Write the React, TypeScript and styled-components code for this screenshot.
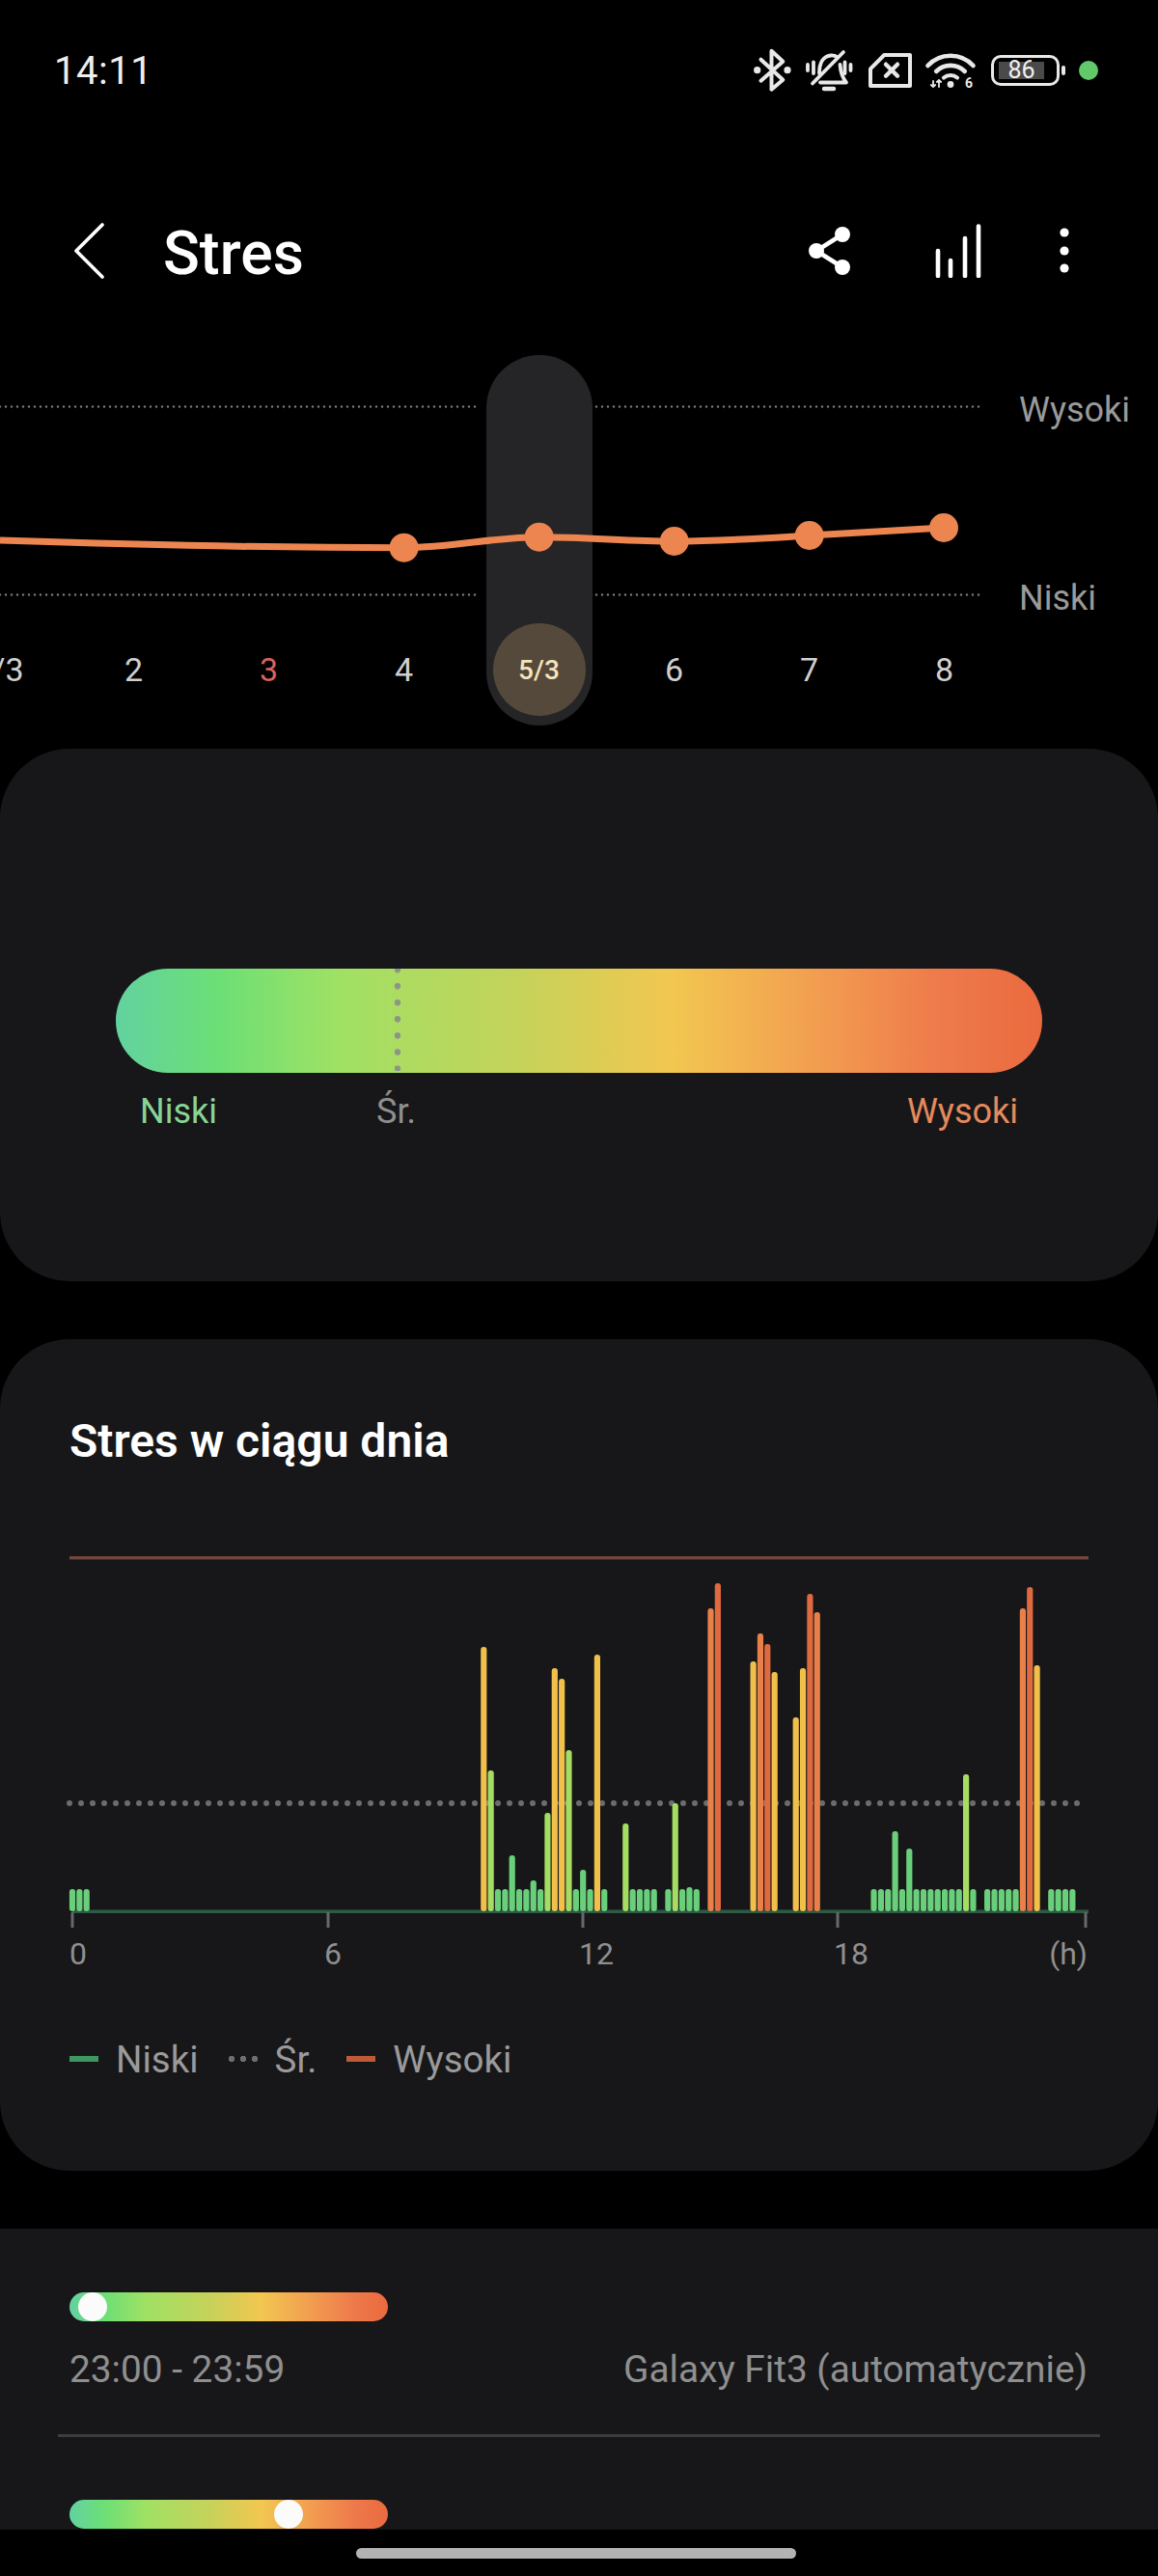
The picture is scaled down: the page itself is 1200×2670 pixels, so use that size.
import { createGlobalStyle } from "styled-components";
import styled from "styled-components";

const GlobalStyle = createGlobalStyle`
  html, body {
    margin: 0;
    padding: 0;
    background: #000;
    font-family: Roboto, "Liberation Sans", sans-serif;
  }
`;

const STRESS_GRADIENT =
  "linear-gradient(90deg, #62d2a0 0%, #6cdf76 11%, #9fe164 24%, #c6d25a 44%, #f2c750 60%, #f29a50 77%, #ee7a4b 89%, #ea6a3e 100%)";

const Screen = styled.div`
  position: relative;
  width: 1200px;
  height: 2670px;
  overflow: hidden;
  background: #000;
`;

const StatusBar = styled.div`
  display: flex;
  align-items: center;
  height: 50px;
  padding: 48px 62px 0 56px;
`;

const Clock = styled.span`
  font-size: 40px;
  color: #eeeeee;
  letter-spacing: 0.5px;
`;

const StatusIcons = styled.div`
  display: flex;
  align-items: center;
  gap: 12px;
  margin-left: auto;
`;

const Battery = styled.div`
  display: flex;
  align-items: center;
  gap: 2px;
`;

const BatteryBody = styled.div`
  box-sizing: border-box;
  display: flex;
  align-items: center;
  width: 71px;
  height: 32px;
  padding-left: 5px;
  border: 3px solid #e8e8e8;
  border-radius: 10px;
`;

const BatteryLevel = styled.span`
  width: 47px;
  height: 18px;
  background: #4a4a4a;
  color: #f0f0f0;
  font-size: 25px;
  line-height: 18px;
  text-align: center;
`;

const BatteryNub = styled.span`
  width: 4px;
  height: 10px;
  border-radius: 2px;
  background: #e8e8e8;
`;

const GreenDot = styled.span`
  width: 20px;
  height: 20px;
  margin-left: 2px;
  border-radius: 50%;
  background: #62c96a;
`;

const TopBar = styled.header`
  display: flex;
  align-items: center;
  height: 100px;
  margin-top: 112px;
  padding: 0 89px 0 75px;
`;

const PageTitle = styled.h1`
  margin: 5px 0 0 58px;
  font-size: 62.5px;
  line-height: 70px;
  font-weight: 500;
  color: #fff;
`;

const TopActions = styled.div`
  display: flex;
  align-items: center;
  gap: 75px;
  margin-left: auto;
`;

const Trend = styled.section`
  position: relative;
  height: 408px;
  margin-top: 58px;
  overflow: hidden;
`;

const SelectedPill = styled.div`
  position: absolute;
  top: 0;
  left: 504px;
  width: 110px;
  height: 384px;
  border-radius: 55px;
  background: #252527;
`;

const TrendPlot = styled.div`
  position: relative;
  display: flex;
  height: 278px;
`;

const LevelLabels = styled.div`
  display: flex;
  flex-direction: column;
  gap: 155px;
  margin-left: 38px;
  padding-top: 37px;
`;

const LevelLabel = styled.span`
  font-size: 36px;
  line-height: 40px;
  color: #9a9a9a;
`;

const DayRow = styled.div`
  position: relative;
  display: flex;
  margin-left: -71.5px;
`;

const Day = styled.div<{ $tone?: "weekend" | "selected" }>`
  display: flex;
  flex: 0 0 140px;
  align-items: center;
  justify-content: center;
  height: 96px;
  font-size: 34px;
  color: ${(p) => (p.$tone === "weekend" ? "#d9635b" : "#cfcfcf")};
`;

const SelectedDay = styled.span`
  display: flex;
  align-items: center;
  justify-content: center;
  width: 96px;
  height: 96px;
  border-radius: 50%;
  background: #54493a;
  color: #f6e3bd;
  font-size: 28px;
  font-weight: 500;
`;

const Card = styled.section`
  height: 552px;
  padding: 228px 120px 0;
  box-sizing: border-box;
  border-radius: 72px;
  background: #171719;
`;

const ScaleBar = styled.div`
  position: relative;
  height: 108px;
  border-radius: 54px;
  background: ${STRESS_GRADIENT};
`;

const AverageMark = styled.span`
  position: absolute;
  top: 0;
  left: 288px;
  width: 8px;
  height: 106px;
  background: radial-gradient(circle at 4px 4px, #8f9488 3px, transparent 3.6px) 0 -3px / 8px 17.1px repeat-y;
`;

const ScaleLabels = styled.div`
  display: flex;
  padding: 18px 25px 0 25px;
  font-size: 36px;
  line-height: 44px;
`;

const ScaleLabel = styled.span<{ $color: string; $offset?: number; $end?: boolean }>`
  color: ${(p) => p.$color};
  margin-left: ${(p) => (p.$end ? "auto" : `${p.$offset ?? 0}px`)};
`;

const ChartCard = styled.section`
  height: 862px;
  margin-top: 60px;
  padding-top: 76px;
  box-sizing: border-box;
  border-radius: 72px;
  background: #171719;
`;

const ChartTitle = styled.h2`
  margin: 0 0 76px 72px;
  font-size: 48px;
  line-height: 60px;
  font-weight: 600;
  color: #fff;
`;

const ChartSvg = styled.svg`
  display: block;
`;

const AxisLabels = styled.div`
  display: grid;
  grid-template-columns: 264px 264px 264px 150px 1fr;
  width: 1055px;
  height: 50px;
  margin-left: 72px;
  font-size: 32px;
  line-height: 50px;
  color: #8f8f8f;
`;

const AxisEnd = styled.span`
  text-align: right;
`;

const Legend = styled.div`
  display: flex;
  align-items: center;
  height: 50px;
  margin: 59px 0 0 72px;
  font-size: 38.5px;
  color: #9a9a9a;
`;

const LegendSwatch = styled.span<{ $color: string }>`
  width: 30px;
  height: 6px;
  margin-right: 18px;
  background: ${(p) => p.$color};
`;

const LegendDots = styled.span`
  width: 30px;
  height: 6px;
  margin-right: 18px;
  background: radial-gradient(circle at 3px 3px, #6e6e6e 3px, transparent 3.5px) 0 0 / 12px 6px repeat-x;
`;

const LegendText = styled.span`
  margin-right: 31px;
`;

const Readings = styled.section`
  height: 400px;
  margin-top: 60px;
  padding-top: 66px;
  box-sizing: border-box;
  background: #171719;
`;

const ReadingRow = styled.div`
  padding: 0 73px 0 72px;
`;

const ReadingSlider = styled.div`
  position: relative;
  width: 330px;
  height: 30px;
  border-radius: 15px;
  background: ${STRESS_GRADIENT};
`;

const ReadingThumb = styled.span<{ $left: number }>`
  position: absolute;
  top: 0;
  left: ${(p) => p.$left}px;
  width: 30px;
  height: 30px;
  border-radius: 50%;
  background: #fbfbfb;
`;

const ReadingMeta = styled.div`
  display: flex;
  justify-content: space-between;
  margin-top: 30px;
  font-size: 38.8px;
  line-height: 40px;
  color: #8f8f8f;
`;

const Divider = styled.hr`
  height: 3px;
  margin: 47px 60px 65px;
  border: 0;
  background: #3c3c3e;
`;

const NavBar = styled.div`
  position: absolute;
  left: 0;
  right: 0;
  bottom: 0;
  height: 48px;
  background: #000;
`;

const HomeIndicator = styled.div`
  width: 456px;
  height: 11px;
  margin: 19px 0 0 369px;
  border-radius: 6px;
  background: #b3b3b3;
`;

type BarKind = "g" | "l" | "y" | "o" | "d";

const BAR_COLORS: Record<BarKind, string> = {
  g: "#69cf7b",
  l: "#a5dc62",
  y: "#f0c04a",
  o: "#ea8049",
  d: "#e06a40",
};

// slot = 10 minut, wysokosc w px
const lowSlots = [
  0, 1, 2, 60, 61, 63, 64, 66, 71, 73, 75, 79, 80, 81, 82, 84, 86, 88, 113, 114, 115, 117,
  119, 120, 121, 122, 123, 124, 125, 127, 129, 130, 131, 132, 133, 138, 139, 140, 141,
];

const tallBars: [number, number, BarKind][] = [
  [58, 274, "y"], [59, 146, "l"], [62, 58, "g"], [65, 32, "g"], [67, 102, "l"],
  [68, 252, "y"], [69, 241, "y"], [70, 167, "l"], [72, 43, "g"], [74, 266, "y"],
  [78, 91, "l"], [85, 112, "l"], [87, 25, "g"], [90, 314, "o"], [91, 340, "d"],
  [96, 259, "y"], [97, 288, "o"], [98, 277, "d"], [99, 248, "y"], [102, 201, "y"],
  [103, 252, "y"], [104, 329, "d"], [105, 310, "o"], [116, 83, "g"], [118, 65, "g"],
  [126, 142, "l"], [134, 314, "o"], [135, 336, "d"], [136, 255, "y"],
];

const bars: [number, number, BarKind][] = [
  ...lowSlots.map((slot): [number, number, BarKind] => [slot, 23, "g"]),
  ...tallBars,
];

const BASE_Y = 381;
const slotX = (slot: number) => 75 + slot * 7.35;

const midDots = Array.from({ length: 88 }, (_, i) => 72 + i * 12);
const ticks = [75, 340, 604, 868, 1125];

const StressChart = () => (
  <ChartSvg width="1200" height="400" viewBox="0 0 1200 400">
    <rect x="72" y="13" width="1056" height="3.4" fill="#73463b" />
    {midDots.map((x) => (
      <circle key={x} cx={x} cy="269" r="3" fill="#6c6c6c" />
    ))}
    <rect x="75" y={BASE_Y - 1.5} width="1053" height="3.5" fill="#2e5a45" />
    {ticks.map((x) => (
      <rect key={x} x={x - 1.5} y={BASE_Y + 1} width="3" height="16" fill="#66686a" />
    ))}
    {bars.map(([slot, h, kind]) => (
      <rect
        key={slot}
        x={slotX(slot) - 3.1}
        y={BASE_Y - h}
        width="6.2"
        height={h}
        rx="3"
        fill={BAR_COLORS[kind]}
      />
    ))}
  </ChartSvg>
);

const trendPoints = [
  [418.6, 199.7],
  [558.7, 188.7],
  [698.7, 193],
  [838.7, 187],
  [978, 179],
];

const TrendLines = () => (
  <svg width="1018" height="278" viewBox="0 0 1018 278">
    <g stroke="#777" strokeWidth="2.6" strokeDasharray="0 6" strokeLinecap="round">
      <path d="M0 53.5H497M618 53.5H1018" />
      <path d="M0 248.5H497M618 248.5H1018" />
    </g>
    <path
      d="M0 192C150 197 280 199.7 418.6 199.7C470 199.7 510 188.7 558.7 188.7C610 188.7 650 193 698.7 193C750 193 790 190 838.7 187L978 179"
      fill="none"
      stroke="#ec854f"
      strokeWidth="7"
    />
    {trendPoints.map(([x, y]) => (
      <circle key={x} cx={x} cy={y} r="15" fill="#ec854f" />
    ))}
  </svg>
);

const BluetoothIcon = () => (
  <svg width="40" height="46" viewBox="0 0 40 46" fill="none">
    <path
      d="M7.5 11.7L30.3 32.7L18.5 42.7V2.7L30.3 13.7L7.5 33.7"
      stroke="#e8e8e8"
      strokeWidth="4"
      strokeLinejoin="round"
      strokeLinecap="round"
    />
    <circle cx="3.7" cy="22.7" r="3.6" fill="#e8e8e8" />
    <circle cx="35" cy="22.7" r="3.6" fill="#e8e8e8" />
  </svg>
);

const MutedBellIcon = () => (
  <svg width="53" height="46" viewBox="0 0 53 46" fill="none" stroke="#e8e8e8" strokeWidth="3.8" strokeLinecap="round" strokeLinejoin="round">
    <path d="M4 17V23M10 14.5V26M42.5 14.5V26M48.5 17V23" />
    <path d="M16 26C16 14 21 8 28 7.5C31 7.3 33 8 35 9.5M37.5 17C38 24 39.5 30 44 35.5H17" />
    <path d="M9 36.5L41 4" />
    <path d="M21 42H31" strokeWidth="4.4" />
  </svg>
);

const SimOffIcon = () => (
  <svg width="48" height="46" viewBox="0 0 48 46" fill="none" stroke="#e8e8e8" strokeLinecap="round" strokeLinejoin="round">
    <path d="M4 21.4L18.3 7H45V39H4Z" strokeWidth="4" />
    <path d="M20 16.7L32 28.7M32 16.7L20 28.7" strokeWidth="4.4" />
  </svg>
);

const WifiIcon = () => (
  <svg width="57" height="46" viewBox="0 0 57 46" fill="none" stroke="#e8e8e8" strokeLinecap="round">
    <path d="M3.5 18A32 32 0 0 1 50.5 18" strokeWidth="4.6" />
    <path d="M12.2 24A21 21 0 0 1 41.8 24" strokeWidth="4.6" />
    <path d="M20 30.5A11 11 0 0 1 34 30.5" strokeWidth="4.2" />
    <circle cx="27" cy="37.5" r="3.4" fill="#e8e8e8" stroke="none" />
    <path d="M9 34V40M15 33V40M6.8 38L9 40M11.2 38L9 40M12.8 35L15 33L17.2 35" strokeWidth="1.8" />
    <text x="42" y="41" fontSize="14" fontWeight="700" fill="#e8e8e8" stroke="none" fontFamily="Roboto, sans-serif">6</text>
  </svg>
);

const BackIcon = () => (
  <svg width="36" height="60" viewBox="0 0 36 60" fill="none">
    <path d="M31 3L4 30L31 57" stroke="#fff" strokeWidth="3.6" strokeLinecap="round" strokeLinejoin="round" />
  </svg>
);

const ShareIcon = () => (
  <svg width="48" height="54" viewBox="0 0 48 54" fill="#fff">
    <path d="M37 10L10 27L37 44" fill="none" stroke="#fff" strokeWidth="4.6" />
    <circle cx="37" cy="10" r="8" />
    <circle cx="10" cy="27" r="8" />
    <circle cx="37" cy="44" r="8" />
  </svg>
);

const StatsIcon = () => (
  <svg width="61" height="56" viewBox="0 0 61 56" fill="none" stroke="#fff" strokeWidth="4.6" strokeLinecap="round">
    <path d="M13 28V54M26 38V54M41 15V54M55 2.5V54" />
  </svg>
);

const MoreIcon = () => (
  <svg width="16" height="56" viewBox="0 0 16 56" fill="#fff">
    <circle cx="8" cy="9" r="4.6" />
    <circle cx="8" cy="28" r="4.6" />
    <circle cx="8" cy="46" r="4.6" />
  </svg>
);

export default function App() {
  return (
    <Screen>
      <GlobalStyle />
      <StatusBar>
        <Clock>14:11</Clock>
        <StatusIcons>
          <BluetoothIcon />
          <MutedBellIcon />
          <SimOffIcon />
          <WifiIcon />
          <Battery>
            <BatteryBody>
              <BatteryLevel>86</BatteryLevel>
            </BatteryBody>
            <BatteryNub />
          </Battery>
          <GreenDot />
        </StatusIcons>
      </StatusBar>

      <TopBar>
        <BackIcon />
        <PageTitle>Stres</PageTitle>
        <TopActions>
          <ShareIcon />
          <StatsIcon />
          <MoreIcon />
        </TopActions>
      </TopBar>

      <Trend>
        <SelectedPill />
        <TrendPlot>
          <TrendLines />
          <LevelLabels>
            <LevelLabel>Wysoki</LevelLabel>
            <LevelLabel>Niski</LevelLabel>
          </LevelLabels>
        </TrendPlot>
        <DayRow>
          <Day>1/3</Day>
          <Day>2</Day>
          <Day $tone="weekend">3</Day>
          <Day>4</Day>
          <Day>
            <SelectedDay>5/3</SelectedDay>
          </Day>
          <Day>6</Day>
          <Day>7</Day>
          <Day>8</Day>
        </DayRow>
      </Trend>

      <Card>
        <ScaleBar>
          <AverageMark />
        </ScaleBar>
        <ScaleLabels>
          <ScaleLabel $color="#86d596">Niski</ScaleLabel>
          <ScaleLabel $color="#8f8f8f" $offset={165}>Śr.</ScaleLabel>
          <ScaleLabel $color="#e48a5c" $end>Wysoki</ScaleLabel>
        </ScaleLabels>
      </Card>

      <ChartCard>
        <ChartTitle>Stres w ciągu dnia</ChartTitle>
        <StressChart />
        <AxisLabels>
          <span>0</span>
          <span>6</span>
          <span>12</span>
          <span>18</span>
          <AxisEnd>(h)</AxisEnd>
        </AxisLabels>
        <Legend>
          <LegendSwatch $color="#3f9660" />
          <LegendText>Niski</LegendText>
          <LegendDots />
          <LegendText>Śr.</LegendText>
          <LegendSwatch $color="#bd5a37" />
          <LegendText>Wysoki</LegendText>
        </Legend>
      </ChartCard>

      <Readings>
        <ReadingRow>
          <ReadingSlider>
            <ReadingThumb $left={9} />
          </ReadingSlider>
          <ReadingMeta>
            <span>23:00 - 23:59</span>
            <span>Galaxy Fit3 (automatycznie)</span>
          </ReadingMeta>
        </ReadingRow>
        <Divider />
        <ReadingRow>
          <ReadingSlider>
            <ReadingThumb $left={212} />
          </ReadingSlider>
        </ReadingRow>
      </Readings>

      <NavBar>
        <HomeIndicator />
      </NavBar>
    </Screen>
  );
}
